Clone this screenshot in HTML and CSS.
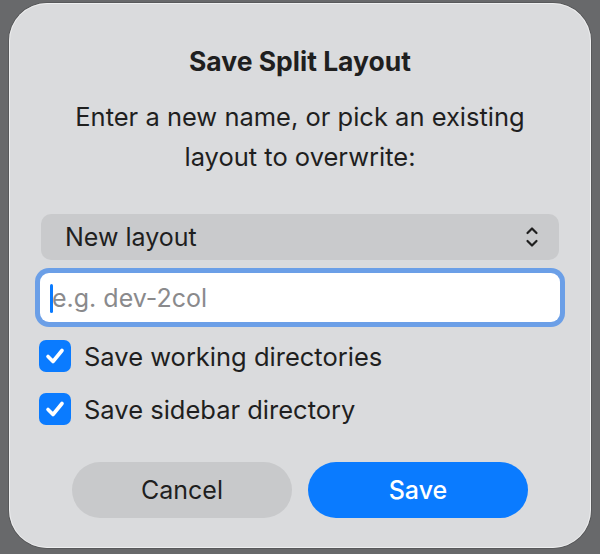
FILE: index.html
```html
<!DOCTYPE html>
<html lang="en">
<head>
    <meta charset="UTF-8">
    <meta name="viewport" content="width=device-width, initial-scale=1.0">
    <title>Save Split Layout</title>
    <link rel="stylesheet" href="styles.css">
</head>
<body>
    <div class="dialog">
        <h2 class="title">Save Split Layout</h2>
        <p class="message">Enter a new name, or pick an existing<br>layout to overwrite:</p>

        <div class="select">
            <span>New layout</span>
            <svg class="chevrons" width="14" height="22" viewBox="0 0 14 22">
                <path d="M2.5 7 L7 2.5 L11.5 7 M2.5 15 L7 19.5 L11.5 15" fill="none" stroke="#1f1f1f" stroke-width="2.2" stroke-linecap="round" stroke-linejoin="round"/>
            </svg>
        </div>

        <div class="field">
            <span class="caret"></span>
            <input type="text" placeholder="e.g. dev-2col">
        </div>

        <label class="check">
            <span class="box">
                <svg width="32" height="32" viewBox="0 0 32 32">
                    <path d="M9 16.5 L14 21.5 L23 10.5" fill="none" stroke="#fff" stroke-width="3.6" stroke-linecap="round" stroke-linejoin="round"/>
                </svg>
            </span>
            Save working directories
        </label>
        <label class="check">
            <span class="box">
                <svg width="32" height="32" viewBox="0 0 32 32">
                    <path d="M9 16.5 L14 21.5 L23 10.5" fill="none" stroke="#fff" stroke-width="3.6" stroke-linecap="round" stroke-linejoin="round"/>
                </svg>
            </span>
            Save sidebar directory
        </label>

        <div class="buttons">
            <button class="btn cancel">Cancel</button>
            <button class="btn save">Save</button>
        </div>
    </div>
</body>
</html>
```

FILE: styles.css
```css
body {
    margin: 0;
    font-family: Inter, "Noto Sans", sans-serif;
    background: #68696b;
    color: #1f1f1f;
    width: 600px;
    height: 554px;
    overflow: hidden;
}
.dialog {
    box-sizing: border-box;
    width: 582px;
    height: 545px;
    margin: 3px 0 0 9px;
    padding: 0 32px;
    background: #dadbdd;
    border-radius: 38px;
    box-shadow: inset 0 0 0 1px rgba(255, 255, 255, 0.55), 0 0 0 1px rgba(0, 0, 0, 0.15);
    display: flex;
    flex-direction: column;
}
.title {
    margin: 42px 0 0;
    text-align: center;
    font-size: 26.5px;
    font-weight: 700;
    line-height: 32px;
}
.message {
    margin: 20px 0 0;
    text-align: center;
    font-size: 25.5px;
    line-height: 40px;
}
.select {
    margin-top: 37px;
    height: 46px;
    border-radius: 10px;
    background: #c9cacc;
    display: flex;
    align-items: center;
    justify-content: space-between;
    padding: 0 20px 0 24px;
    font-size: 25px;
}
.chevrons {
    display: block;
}
.field {
    position: relative;
    margin: 13px -1px 0;
    height: 49px;
    border-radius: 9px;
    background: #fff;
    box-shadow: 0 0 0 5px #6b9fe7;
}
.field input {
    box-sizing: border-box;
    width: 100%;
    height: 100%;
    border: none;
    outline: none;
    background: transparent;
    padding: 0 0 0 12px;
    font-family: inherit;
    font-size: 25px;
    color: #1f1f1f;
}
.field input::placeholder {
    color: #8a8a8c;
}
.caret {
    position: absolute;
    left: 10px;
    top: 11px;
    width: 3px;
    height: 29px;
    border-radius: 2px;
    background: #0a7bff;
}
.check {
    display: flex;
    align-items: center;
    gap: 13px;
    margin: 18px 0 0 -2px;
    font-size: 25.5px;
    height: 32px;
}
.check + .check {
    margin-top: 21px;
}
.box {
    width: 32px;
    height: 32px;
    border-radius: 7px;
    background: #0a7bff;
}
.box svg {
    display: block;
}
.buttons {
    margin-top: 37px;
    display: flex;
    justify-content: center;
    gap: 16px;
}
.btn {
    width: 220px;
    height: 56px;
    border: none;
    border-radius: 28px;
    font-family: inherit;
    font-size: 25px;
    cursor: pointer;
}
.cancel {
    background: #c8c9cb;
    color: #1f1f1f;
}
.save {
    background: #0a7bff;
    color: #fff;
    font-weight: 500;
}
```
